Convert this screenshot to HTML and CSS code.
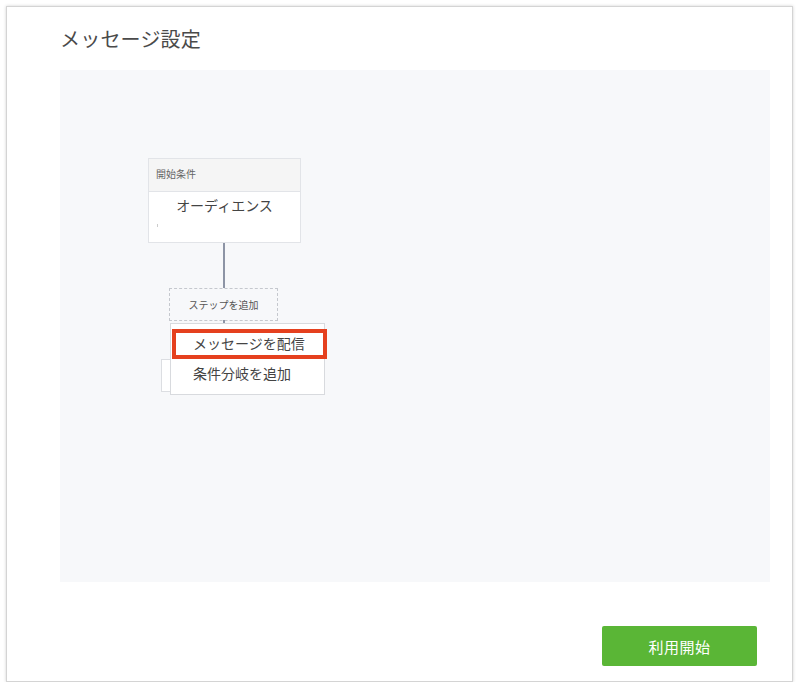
FILE: index.html
```html
<!DOCTYPE html>
<html lang="ja">
<head>
<meta charset="utf-8">
<link rel="stylesheet" href="styles.css">
</head>
<body>
<div class="card">
  <h1 class="title">メッセージ設定</h1>
  <div class="canvas">
    <div class="node start">
      <div class="node-head">開始条件</div>
      <div class="node-body">
        <div class="node-label">オーディエンス</div>
        <div class="tick"></div>
      </div>
    </div>
    <div class="edge"></div>
    <div class="add-step">ステップを追加</div>
    <div class="ghost"></div>
    <div class="menu">
      <div class="menu-item highlighted">メッセージを配信</div>
      <div class="menu-item">条件分岐を追加</div>
    </div>
    <div class="dot"></div>
  </div>
  <div class="footer">
    <button class="btn-primary">利用開始</button>
  </div>
</div>
</body>
</html>
```

FILE: styles.css
```css
html, body {
  margin: 0;
  padding: 0;
  background: #ffffff;
  font-family: "Noto Sans CJK JP", "Noto Sans", sans-serif;
}
.card {
  margin: 6px 0 0 6px;
  width: 785px;
  height: 674px;
  border: 1px solid #d4d4d4;
  box-shadow: 0 0 3px rgba(0,0,0,0.18);
  background: #fff;
  box-sizing: content-box;
  display: flex;
  flex-direction: column;
  padding: 0;
}
.title {
  margin: 18px 0 0 53px;
  font-size: 20px;
  font-weight: 400;
  color: #4a4a4a;
  line-height: 28px;
  height: 45px;
  letter-spacing: 0.2px;
}
.canvas {
  position: relative;
  margin-left: 53px;
  width: 710px;
  height: 512px;
  background: #f7f8fa;
}
.node {
  position: absolute;
  background: #fff;
  border: 1px solid #e2e4e8;
  box-sizing: border-box;
}
.start {
  left: 88px;
  top: 88px;
  width: 153px;
  height: 85px;
}
.node-head {
  height: 32px;
  background: #f5f5f5;
  border-bottom: 1px solid #e2e4e8;
  font-size: 10px;
  color: #666;
  line-height: 30px;
  padding-left: 7px;
}
.node-body {
  position: relative;
}
.node-label {
  text-align: center;
  font-size: 14px;
  color: #444;
  line-height: 20px;
  padding-top: 3px;
}
.tick {
  position: absolute;
  left: 8px;
  top: 32px;
  width: 1px;
  height: 3px;
  background: #ccc;
}
.edge {
  position: absolute;
  left: 163px;
  top: 173px;
  width: 2px;
  height: 45px;
  background: #8d94a5;
}
.add-step {
  position: absolute;
  left: 109px;
  top: 218px;
  width: 109px;
  height: 33px;
  box-sizing: border-box;
  border: 1px dashed #c5c8ce;
  font-size: 10px;
  color: #555;
  text-align: center;
  line-height: 31px;
}
.dot {
  position: absolute;
  left: 163px;
  top: 250px;
  width: 2px;
  height: 3px;
  background: #8d94a5;
}
.ghost {
  position: absolute;
  left: 101px;
  top: 289px;
  width: 60px;
  height: 33px;
  box-sizing: border-box;
  border: 1px solid #dcdee2;
  background: #fff;
}
.menu {
  position: absolute;
  left: 110px;
  top: 253px;
  width: 155px;
  height: 72px;
  box-sizing: border-box;
  border: 1px solid #d8dade;
  background: #fff;
  padding-top: 5px;
}
.menu-item {
  font-size: 14px;
  color: #444;
  line-height: 29px;
  padding-left: 22px;
  height: 29px;
  box-sizing: border-box;
}
.menu-item.highlighted {
  margin-left: 1px;
  margin-right: -3px;
  border: 4px solid #e5401e;
  line-height: 21px;
  padding-left: 17px;
  height: 30px;
}
.footer {
  display: flex;
  justify-content: flex-end;
  padding: 44px 35px 0 0;
}
.btn-primary {
  width: 155px;
  height: 40px;
  border: 0;
  border-radius: 2px;
  background: #5ab636;
  color: #fff;
  font-family: "Noto Sans CJK JP", "Noto Sans", sans-serif;
  font-size: 15px;
  letter-spacing: 0.5px;
  padding: 0;
}
```
